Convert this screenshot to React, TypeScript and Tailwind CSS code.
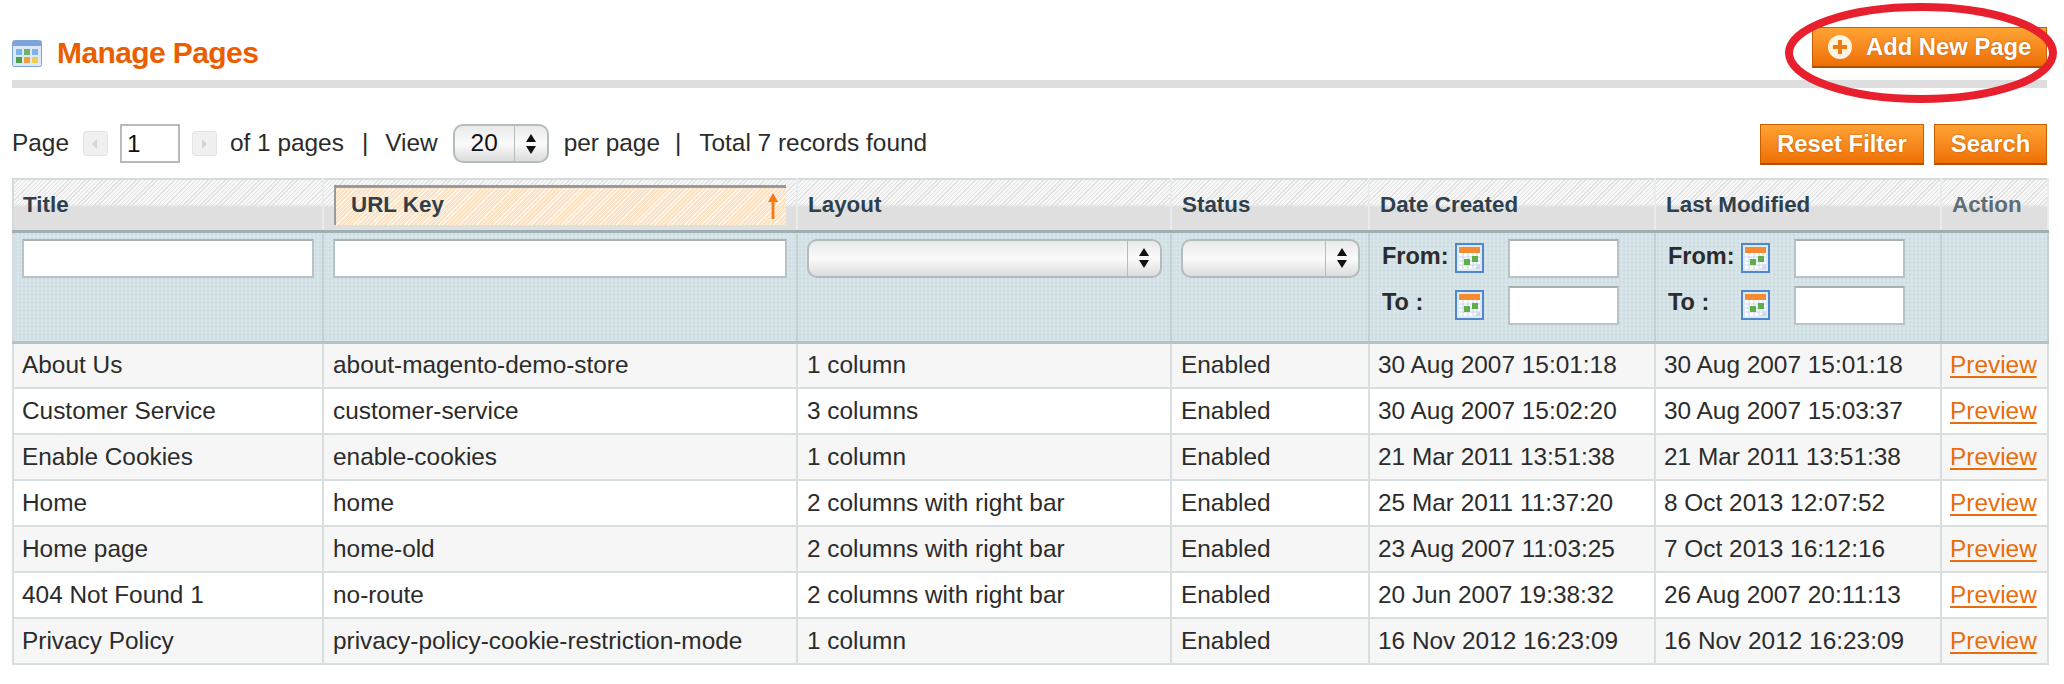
import React from 'react'

const rows = [
  ['About Us', 'about-magento-demo-store', '1 column', 'Enabled', '30 Aug 2007 15:01:18', '30 Aug 2007 15:01:18'],
  ['Customer Service', 'customer-service', '3 columns', 'Enabled', '30 Aug 2007 15:02:20', '30 Aug 2007 15:03:37'],
  ['Enable Cookies', 'enable-cookies', '1 column', 'Enabled', '21 Mar 2011 13:51:38', '21 Mar 2011 13:51:38'],
  ['Home', 'home', '2 columns with right bar', 'Enabled', '25 Mar 2011 11:37:20', '8 Oct 2013 12:07:52'],
  ['Home page', 'home-old', '2 columns with right bar', 'Enabled', '23 Aug 2007 11:03:25', '7 Oct 2013 16:12:16'],
  ['404 Not Found 1', 'no-route', '2 columns with right bar', 'Enabled', '20 Jun 2007 19:38:32', '26 Aug 2007 20:11:13'],
  ['Privacy Policy', 'privacy-policy-cookie-restriction-mode', '1 column', 'Enabled', '16 Nov 2012 16:23:09', '16 Nov 2012 16:23:09'],
]

const orangeButton =
  'h-[41px] border border-[#c75f00] border-b-2 border-b-[#b04f00] bg-gradient-to-b from-[#ffa333] to-[#ee6f00] font-bold text-white text-[23.8px] [text-shadow:0_0_2px_#b85a00]'

const thClass =
  'h-[52px] border-r-2 border-[#e8ecec] p-0 text-left align-middle font-bold text-[22.4px] text-[#2f3f4c] border-b-[3px] border-b-[#9fb0b3] bg-[linear-gradient(to_bottom,transparent_48%,#dfdfdf_54%),repeating-linear-gradient(135deg,#f7f7f7_0,#f7f7f7_2px,#e2e2e2_2px,#e2e2e2_3px)]'

const filterCell =
  'h-[111px] border-r-2 border-[#c3d0d3] p-0 align-top bg-[#d7e5e9] bg-[radial-gradient(#cbdade_1px,transparent_1px)] bg-size-[4px_4px] border-b-[3px] border-b-[#b5c3c5]'

const inputClass =
  'h-[39px] block border-2 border-[#b9c2c4] border-t-[#a8b0b2] bg-white'

const CalendarIcon = () => (
  <svg width="29" height="30" viewBox="0 0 29 30" className="shrink-0">
    <rect x="1" y="1" width="27" height="28" fill="#dfeaf8" stroke="#4f86cc" strokeWidth="2" />
    <rect x="4" y="4" width="21" height="6" fill="#f58a2e" />
    <rect x="4" y="10" width="21" height="16" fill="#ffffff" />
    <path d="M4 14h21M4 18h21M4 22h21M8 10v16M13 10v16M18 10v16M22 10v16" stroke="#c6d6ea" strokeWidth="1" />
    <rect x="9" y="16" width="6" height="6" fill="#5fae4a" />
    <rect x="17" y="13" width="6" height="6" fill="#5fae4a" />
    <path d="M19 26l6-5v5z" fill="#c9d9ee" />
  </svg>
)

const Stepper = () => (
  <svg width="12" height="22" viewBox="0 0 12 22">
    <path d="M6 1l5 8H1zM6 21l5-8H1z" fill="#111" />
  </svg>
)

const SelectBox = ({ value, width }: { value?: string; width: string }) => (
  <div
    className={`${width} flex h-[39px] items-center rounded-[10px] border-2 border-[#b4bcbe] bg-gradient-to-b from-[#e9e9e9] via-[#fbfbfb] to-[#dcdcdc] text-[24.4px] text-[#111]`}
  >
    <span className="flex-1 text-center">{value}</span>
    <span className="flex h-full w-[33px] items-center justify-center border-l border-[#b4bcbe]">
      <Stepper />
    </span>
  </div>
)

const PagerArrow = ({ dir }: { dir: 'left' | 'right' }) => (
  <span className="flex h-[25px] w-[25px] items-center justify-center rounded-[3px] border border-[#e4e4e4] bg-[#f0f0f0]">
    <svg width="8" height="12" viewBox="0 0 8 12">
      <path d={dir === 'left' ? 'M6 1v10L1 6z' : 'M2 1v10l5-5z'} fill="#d4d4d4" />
    </svg>
  </span>
)

const DateRange = () => (
  <div className="flex flex-col gap-[8px] pl-[12px] pt-[6px] font-bold text-[23.5px] text-[#2b2b2b]">
    <div className="flex items-center">
      <span className="w-[73px] -translate-y-[1px]">From:</span>
      <CalendarIcon />
      <input className={`${inputClass} ml-[24px] w-[111px]`} />
    </div>
    <div className="flex items-center">
      <span className="w-[73px] -translate-y-[2px]">To :</span>
      <CalendarIcon />
      <input className={`${inputClass} ml-[24px] w-[111px]`} />
    </div>
  </div>
)

const App = () => {
  return (
    <div className="relative h-[684px] w-[2064px] overflow-hidden bg-white pl-[12px] pr-[17px] font-['Liberation_Sans',Arial,sans-serif] text-[#2b2b2b]">
      <div className="flex h-[88px] items-start justify-between border-b-[8px] border-[#dedede] pt-[27px]">
        <div className="flex items-center gap-[15px] pt-[11px]">
          <svg width="30" height="27" viewBox="0 0 30 27">
            <rect x="0.5" y="0.5" width="29" height="26" rx="2" fill="#dbe8f7" stroke="#7fa4d6" />
            <rect x="1" y="1" width="28" height="5" fill="#7ea3dc" />
            <rect x="4" y="9" width="6" height="6" fill="#7fb2e8" />
            <rect x="12" y="9" width="6" height="6" fill="#6db36a" />
            <rect x="20" y="9" width="6" height="6" fill="#7fb2e8" />
            <rect x="4" y="17" width="6" height="6" fill="#4e9e4a" />
            <rect x="12" y="17" width="6" height="6" fill="#f0a13c" />
            <rect x="20" y="17" width="6" height="6" fill="#f2cc4e" />
          </svg>
          <h1 className="text-[30px] font-bold leading-none tracking-[-0.6px] text-[#eb5e00]">Manage Pages</h1>
        </div>
        <button className={`${orangeButton} flex w-[235px] items-center pl-[15px]`}>
          <svg width="24" height="24" viewBox="0 0 24 24" className="mr-[14px]">
            <circle cx="12" cy="12" r="12" fill="#fff3e0" />
            <path d="M12 5v14M5 12h14" stroke="#ee7a10" strokeWidth="4" />
          </svg>
          Add New Page
        </button>
      </div>

      <div className="flex h-[90px] items-start justify-between pt-[36px]">
        <div className="flex items-center text-[24.4px] text-[#2b2b2b]">
          <span>Page</span>
          <span className="ml-[14px]"><PagerArrow dir="left" /></span>
          <input value="1" readOnly className="ml-[12px] h-[39px] w-[60px] border-2 border-[#b9b9b9] bg-white pl-[5px] text-[24.4px] text-[#111]" />
          <span className="ml-[12px]"><PagerArrow dir="right" /></span>
          <span className="ml-[13px]">of 1 pages</span>
          <span className="ml-[18px]">|</span>
          <span className="ml-[17px]">View</span>
          <span className="ml-[15px]"><SelectBox value="20" width="w-[96px]" /></span>
          <span className="ml-[15px]">per page</span>
          <span className="ml-[15px]">|</span>
          <span className="ml-[18px]">Total 7 records found</span>
        </div>
        <div className="flex gap-[10px]">
          <button className={`${orangeButton} w-[164px]`}>Reset Filter</button>
          <button className={`${orangeButton} w-[113px]`}>Search</button>
        </div>
      </div>

      <table className="w-[2035px] table-fixed border-collapse border-2 border-[#d3dbdd] text-[24.4px] leading-none">
        <colgroup>
          <col className="w-[310px]" />
          <col className="w-[474px]" />
          <col className="w-[374px]" />
          <col className="w-[198px]" />
          <col className="w-[286px]" />
          <col className="w-[286px]" />
          <col className="w-[107px]" />
        </colgroup>
        <thead>
          <tr>
            <th className={`${thClass} pl-[9px]`}>Title</th>
            <th className={`${thClass} px-[10px] py-[4px]`}>
              <div className="relative flex h-[40px] items-center border-l-2 border-t-[3px] border-[#9a9a9a] bg-[repeating-linear-gradient(135deg,#fbe3c8_0,#fbe3c8_2px,#fff5e8_2px,#fff5e8_3px)] pb-[3px] pl-[15px]">
                URL Key
                <svg width="10" height="26" viewBox="0 0 10 26" className="absolute right-[8px] top-[5px]">
                  <path d="M5 0l5 9H6.4v17H3.6V9H0z" fill="#f57c13" />
                </svg>
              </div>
            </th>
            <th className={`${thClass} pl-[10px]`}>Layout</th>
            <th className={`${thClass} pl-[10px]`}>Status</th>
            <th className={`${thClass} pl-[10px]`}>Date Created</th>
            <th className={`${thClass} pl-[10px]`}>Last Modified</th>
            <th className={`${thClass} pl-[10px] text-[#5e6d75]`}>Action</th>
          </tr>
        </thead>
        <tbody>
          <tr>
            <td className={filterCell}><div className="px-[8px] pt-[6px]"><input className={`${inputClass} w-full`} /></div></td>
            <td className={filterCell}><div className="px-[9px] pt-[6px]"><input className={`${inputClass} w-full`} /></div></td>
            <td className={filterCell}><div className="px-[9px] pt-[6px]"><SelectBox width="w-[355px]" /></div></td>
            <td className={filterCell}><div className="px-[9px] pt-[6px]"><SelectBox width="w-[179px]" /></div></td>
            <td className={filterCell}><DateRange /></td>
            <td className={filterCell}><DateRange /></td>
            <td className={filterCell} />
          </tr>
          {rows.map((row, idx) => (
            <tr key={idx} className={idx % 2 === 0 ? 'bg-[#f6f6f6]' : 'bg-white'}>
              {row.map((cell, cellIdx) => (
                <td key={cellIdx} className={`h-[46px] whitespace-nowrap border-2 border-[#d8dfe1] text-[#2b2b2b] ${cellIdx === 0 || cellIdx >= 4 ? 'pl-[8px]' : 'pl-[9px]'}`}>
                  {cell}
                </td>
              ))}
              <td className="h-[46px] border-2 border-[#d8dfe1] pl-[8px]">
                <a className="text-[#ea6c0c] underline underline-offset-[3px]">Preview</a>
              </td>
            </tr>
          ))}
        </tbody>
      </table>

      <svg width="280" height="106" viewBox="0 0 280 106" className="absolute left-[1781px] top-0">
        <ellipse cx="140" cy="53" rx="132" ry="46" fill="none" stroke="#e8202e" strokeWidth="8" />
      </svg>
    </div>
  )
}

export default App
